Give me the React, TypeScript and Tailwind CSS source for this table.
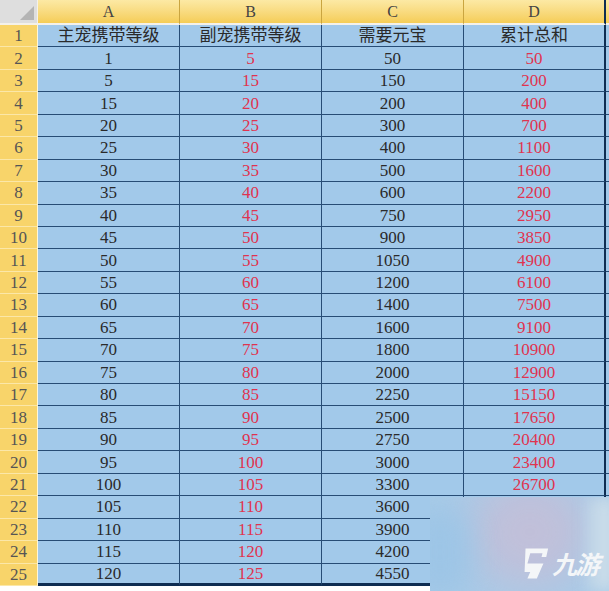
import React from "react";

const colA = [1, 5, 15, 20, 25, 30, 35, 40, 45, 50, 55, 60, 65, 70, 75, 80, 85, 90, 95, 100, 105, 110, 115, 120];
const colB = [5, 15, 20, 25, 30, 35, 40, 45, 50, 55, 60, 65, 70, 75, 80, 85, 90, 95, 100, 105, 110, 115, 120, 125];
const colC = [50, 150, 200, 300, 400, 500, 600, 750, 900, 1050, 1200, 1400, 1600, 1800, 2000, 2250, 2500, 2750, 3000, 3300, 3600, 3900, 4200, 4550];
const colD = [50, 200, 400, 700, 1100, 1600, 2200, 2950, 3850, 4900, 6100, 7500, 9100, 10900, 12900, 15150, 17650, 20400, 23400, 26700, 30300, 34200, 38400, 42950];

const font = { fontFamily: '"Liberation Serif", "Noto Sans CJK SC", serif' };

function Cell({
  children,
  red,
  last,
  lastCol,
}: {
  children?: React.ReactNode;
  red?: boolean;
  last?: boolean;
  lastCol?: boolean;
}) {
  return (
    <div
      className={`flex items-center justify-center bg-[#a2c9ea] text-[17px] leading-none border-[#274c75] ${
        red ? "text-[#e0334f]" : "text-[#2a2a2a]"
      } ${last ? "border-b-[3px] border-b-[#0f2d52]" : "border-b"} ${
        lastCol ? "border-r-2 border-r-[#0f2d52]" : "border-r"
      }`}
    >
      {children}
    </div>
  );
}

function RowNum({ n }: { n: number }) {
  return (
    <div className="flex items-center justify-center bg-[#f8d46a] text-[17px] leading-none text-[#555] border-b border-b-[#fbe7a8] border-r border-r-[#fff6d8]">
      {n}
    </div>
  );
}

function ColHead({ label, lastCol }: { label: string; lastCol?: boolean }) {
  return (
    <div
      className={`flex items-center justify-center bg-gradient-to-b from-[#fce9a4] to-[#f5cd56] text-[16px] text-[#444] border-b-2 border-b-[#f4f1ea] ${
        lastCol ? "border-r-2 border-r-[#0f2d52]" : "border-r border-r-[#caa540]"
      }`}
    >
      {label}
    </div>
  );
}

export default function App() {
  return (
    <div className="relative w-[609px] h-[591px] bg-white overflow-hidden" style={font}>
      <div className="grid grid-cols-[38px_142px_142px_142px_142px_1fr] grid-rows-[25px_repeat(25,22.44px)]">
        {/* corner */}
        <div className="relative bg-[#dedede] border-r border-r-[#f4f1ea] border-b-2 border-b-[#f4f1ea]">
          <div className="absolute right-[3px] bottom-[3px] w-0 h-0 border-l-[14px] border-l-transparent border-b-[14px] border-b-[#b4b4b4]" />
        </div>
        <ColHead label="A" />
        <ColHead label="B" />
        <ColHead label="C" />
        <ColHead label="D" lastCol />
        <div className="bg-gradient-to-b from-[#fce9a4] to-[#f5cd56] border-b-2 border-b-[#f4f1ea]" />

        {/* row 1 */}
        <RowNum n={1} />
        <Cell>主宠携带等级</Cell>
        <Cell>副宠携带等级</Cell>
        <Cell>需要元宝</Cell>
        <Cell lastCol>累计总和</Cell>
        <div className="bg-[#a2c9ea] border-b border-b-[#274c75]" />

        {colA.map((a, i) => {
          const last = i === colA.length - 1;
          return (
            <React.Fragment key={i}>
              <RowNum n={i + 2} />
              <Cell last={last}>{a}</Cell>
              <Cell last={last} red>
                {colB[i]}
              </Cell>
              <Cell last={last}>{colC[i]}</Cell>
              <Cell last={last} lastCol red>
                {colD[i]}
              </Cell>
              <div className={`bg-[#a2c9ea] ${last ? "border-b-[3px] border-b-[#0f2d52]" : "border-b border-b-[#274c75]"}`} />
            </React.Fragment>
          );
        })}
      </div>

      {/* watermark */}
      <div className="absolute left-[430px] top-[497px] w-[179px] h-[94px] bg-[#a8cbe8] overflow-hidden">
        <div className="absolute left-[40px] top-[-20px] w-[120px] h-[110px] rounded-full bg-[#c7bdd6] blur-[22px] opacity-80" />
        <div className="absolute left-[-20px] top-[10px] w-[60px] h-[90px] rounded-full bg-[#9dc5e6] blur-[14px]" />
        <div className="absolute right-[-10px] top-[0px] w-[30px] h-[94px] bg-[#c8dbe9] blur-[8px]" />
        <div className="absolute left-[88px] top-[49px] flex items-center gap-[2px] whitespace-nowrap w-max">
          <svg width="32" height="35" viewBox="0 0 34 36">
            <path
              d="M8 2 H32 L30 11 H25 L26 7 H13 L10 18 H27 L20 34 H10 L13 27 H7 Z"
              fill="#f4f6f8"
            />
          </svg>
          <span
            className="text-[25px] font-bold italic text-[#f4f6f8] tracking-[-2px] leading-none"
            style={{ fontFamily: '"Noto Sans CJK SC", sans-serif' }}
          >
            九游
          </span>
        </div>
      </div>
    </div>
  );
}
